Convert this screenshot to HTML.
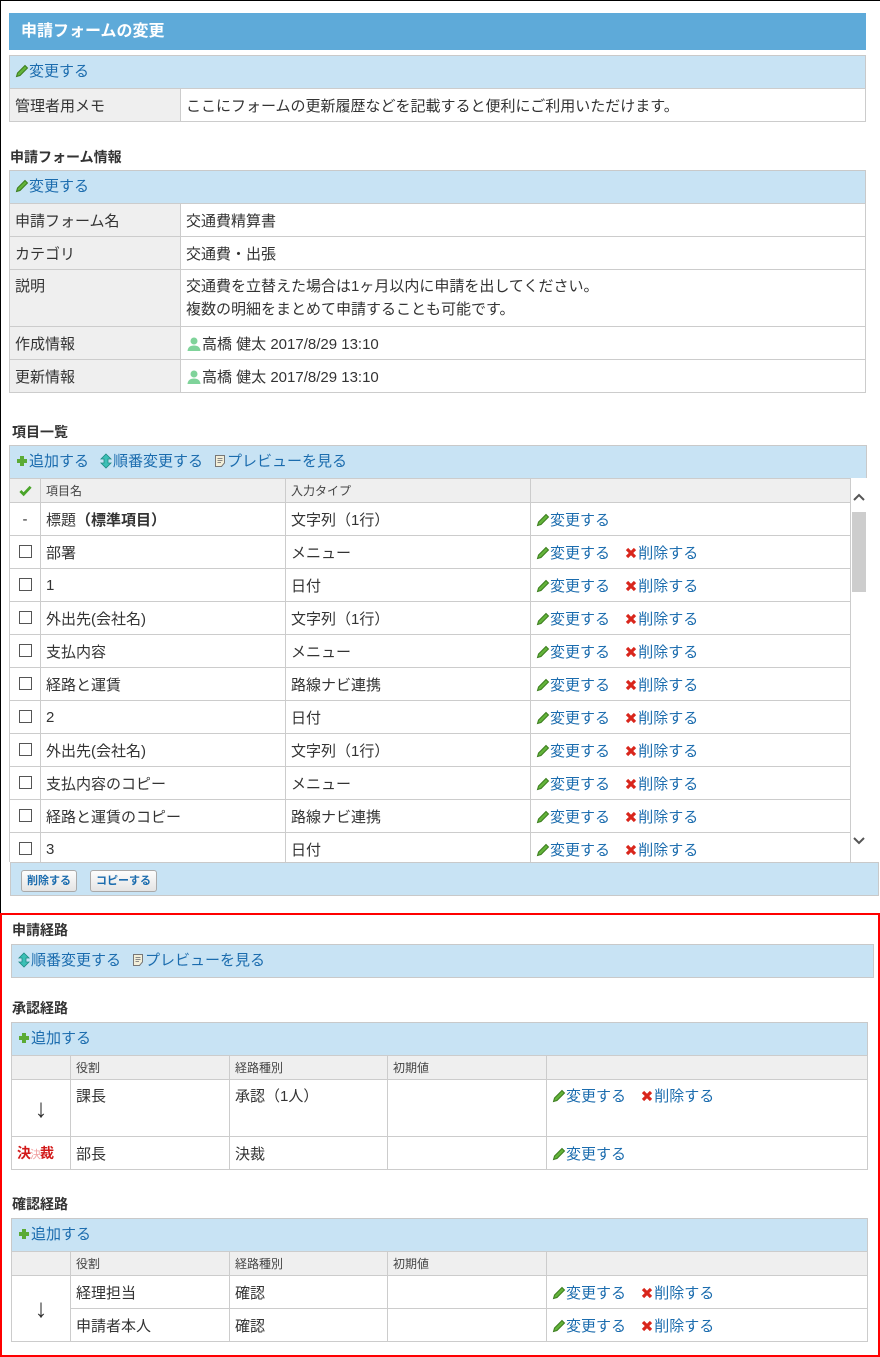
<!DOCTYPE html>
<html><head><meta charset="utf-8">
<style>
*{box-sizing:border-box;margin:0;padding:0}
body{width:880px;height:1357px;position:relative;background:#fff;font-family:"Liberation Sans","Noto Sans CJK JP",sans-serif;font-size:15px;color:#333;overflow:hidden}
.frame{position:absolute;left:0;top:0;width:880px;height:1357px;border:1px solid #000;border-right:none;border-bottom:none}
.red{position:absolute;left:0;top:913px;width:880px;height:444px;border:2px solid #f00}
.title{position:absolute;left:9px;top:13px;width:857px;height:37px;background:#5eaad9;color:#fff;font-weight:bold;font-size:16px;line-height:37px;padding-left:12px}
.bar{position:absolute;background:#c8e3f4;border:1px solid #c9c9c9;height:34px;line-height:32px;padding-left:5px;color:#1b6cae;font-size:15px;white-space:nowrap}
.bar span{margin-right:10px}
h3{position:absolute;font-size:14px;font-weight:bold;color:#333}
table{position:absolute;border-collapse:collapse;table-layout:fixed;font-size:15px;color:#333}
td{border:1px solid #ccc;padding:0 5px;height:33px;vertical-align:middle;white-space:nowrap;overflow:hidden}
td.l{background:#efefef}
tr.h td{background:#efefef;height:24px;font-size:12px;color:#444}
a{color:#1b6cae;text-decoration:none;margin-right:10px}
svg{vertical-align:-2px}
.cb{display:inline-block;width:13px;height:13px;border:1px solid #555;vertical-align:-1px}
.btn{position:absolute;top:7px;height:22px;border:1px solid #aaa;border-radius:3px;background:linear-gradient(#fdfdfd,#e4e4e4);font-size:11px;font-weight:bold;color:#1b6cae;line-height:20px;padding:0 5px}
</style></head><body>
<svg width="0" height="0" style="position:absolute">
<defs>
<symbol id="pen" viewBox="0 0 14 14"><path d="M1.5 12.5 L2.5 9 L10 1.5 L12.5 4 L5 11.5 Z" fill="#63b33a" stroke="#3c7d1f" stroke-width="1"/></symbol>
<symbol id="del" viewBox="0 0 14 14"><path d="M3 3 L11 11 M11 3 L3 11" stroke="#d9261c" stroke-width="3.2"/></symbol>
<symbol id="plus" viewBox="0 0 14 14"><path d="M7 2 V12 M2 7 H12" stroke="#5bab35" stroke-width="4"/></symbol>
<symbol id="ud" viewBox="0 0 14 16"><path d="M7 1 L12 6 H9 V10 H12 L7 15 L2 10 H5 V6 H2 Z" fill="#3cc0b6" stroke="#1e8a82" stroke-width="0.8"/></symbol>
<symbol id="doc" viewBox="0 0 14 14"><path d="M2.5 1.5 H11.5 V9 L8.5 12.5 H2.5 Z" fill="#f3efd9" stroke="#777"/><path d="M4.5 4.5 H9.5 M4.5 6.5 H9.5 M4.5 8.5 H8" stroke="#888"/></symbol>
<symbol id="user" viewBox="0 0 16 16"><circle cx="8" cy="5" r="3.5" fill="#7fd39a"/><path d="M1.5 15 Q2 9.5 8 9.5 Q14 9.5 14.5 15 Z" fill="#7fd39a"/></symbol>
</defs></svg>
<div class="frame"></div>
<div class="title">申請フォームの変更</div>

<div class="bar" style="left:9px;top:55px;width:857px"><svg width="14" height="14"><use href="#pen"/></svg>変更する</div>
<table style="left:9px;top:88px;width:857px"><col style="width:171px"><col>
<tr><td class="l">管理者用メモ</td><td>ここにフォームの更新履歴などを記載すると便利にご利用いただけます。</td></tr></table>

<h3 style="left:10px;top:147px">申請フォーム情報</h3>
<div class="bar" style="left:9px;top:170px;width:857px"><svg width="14" height="14"><use href="#pen"/></svg>変更する</div>
<table style="left:9px;top:203px;width:857px"><col style="width:171px"><col>
<tr><td class="l">申請フォーム名</td><td>交通費精算書</td></tr>
<tr><td class="l">カテゴリ</td><td>交通費・出張</td></tr>
<tr><td class="l" style="height:57px;vertical-align:top;padding-top:5px">説明</td><td style="vertical-align:top;padding-top:5px;line-height:23px">交通費を立替えた場合は1ヶ月以内に申請を出してください。<br>複数の明細をまとめて申請することも可能です。</td></tr>
<tr><td class="l">作成情報</td><td><svg width="16" height="16" style="vertical-align:-3px"><use href="#user"/></svg>高橋 健太 2017/8/29 13:10</td></tr>
<tr><td class="l">更新情報</td><td><svg width="16" height="16" style="vertical-align:-3px"><use href="#user"/></svg>高橋 健太 2017/8/29 13:10</td></tr>
</table>

<h3 style="left:12px;top:422px">項目一覧</h3>
<div class="bar" style="left:9px;top:445px;width:858px"><span><svg width="14" height="14"><use href="#plus"/></svg>追加する</span><span><svg width="14" height="16" style="vertical-align:-3px"><use href="#ud"/></svg>順番変更する</span><span><svg width="14" height="14"><use href="#doc"/></svg>プレビューを見る</span></div>
<div style="position:absolute;left:9px;top:478px;width:858px;height:384px;overflow:hidden">
<table style="left:0;top:0;width:842px"><col style="width:31px"><col style="width:245px"><col style="width:245px"><col>
<tr class="h"><td style="text-align:center"><svg width="13" height="13" viewBox="0 0 14 14"><path d="M1.5 7.5 L5 11 L12.5 3" stroke="#4aa52a" stroke-width="3" fill="none"/></svg></td><td>項目名</td><td>入力タイプ</td><td></td></tr>
<tr><td style="text-align:center">-</td><td>標題<b>（標準項目）</b></td><td>文字列（1行）</td><td><a><svg width="14" height="14"><use href="#pen"/></svg>変更する</a></td></tr>
<tr><td style="text-align:center"><span class="cb"></span></td><td>部署</td><td>メニュー</td><td><a><svg width="14" height="14"><use href="#pen"/></svg>変更する</a> <a><svg width="14" height="14"><use href="#del"/></svg>削除する</a></td></tr>
<tr><td style="text-align:center"><span class="cb"></span></td><td>1</td><td>日付</td><td><a><svg width="14" height="14"><use href="#pen"/></svg>変更する</a> <a><svg width="14" height="14"><use href="#del"/></svg>削除する</a></td></tr>
<tr><td style="text-align:center"><span class="cb"></span></td><td>外出先(会社名)</td><td>文字列（1行）</td><td><a><svg width="14" height="14"><use href="#pen"/></svg>変更する</a> <a><svg width="14" height="14"><use href="#del"/></svg>削除する</a></td></tr>
<tr><td style="text-align:center"><span class="cb"></span></td><td>支払内容</td><td>メニュー</td><td><a><svg width="14" height="14"><use href="#pen"/></svg>変更する</a> <a><svg width="14" height="14"><use href="#del"/></svg>削除する</a></td></tr>
<tr><td style="text-align:center"><span class="cb"></span></td><td>経路と運賃</td><td>路線ナビ連携</td><td><a><svg width="14" height="14"><use href="#pen"/></svg>変更する</a> <a><svg width="14" height="14"><use href="#del"/></svg>削除する</a></td></tr>
<tr><td style="text-align:center"><span class="cb"></span></td><td>2</td><td>日付</td><td><a><svg width="14" height="14"><use href="#pen"/></svg>変更する</a> <a><svg width="14" height="14"><use href="#del"/></svg>削除する</a></td></tr>
<tr><td style="text-align:center"><span class="cb"></span></td><td>外出先(会社名)</td><td>文字列（1行）</td><td><a><svg width="14" height="14"><use href="#pen"/></svg>変更する</a> <a><svg width="14" height="14"><use href="#del"/></svg>削除する</a></td></tr>
<tr><td style="text-align:center"><span class="cb"></span></td><td>支払内容のコピー</td><td>メニュー</td><td><a><svg width="14" height="14"><use href="#pen"/></svg>変更する</a> <a><svg width="14" height="14"><use href="#del"/></svg>削除する</a></td></tr>
<tr><td style="text-align:center"><span class="cb"></span></td><td>経路と運賃のコピー</td><td>路線ナビ連携</td><td><a><svg width="14" height="14"><use href="#pen"/></svg>変更する</a> <a><svg width="14" height="14"><use href="#del"/></svg>削除する</a></td></tr>
<tr><td style="text-align:center"><span class="cb"></span></td><td>3</td><td>日付</td><td><a><svg width="14" height="14"><use href="#pen"/></svg>変更する</a> <a><svg width="14" height="14"><use href="#del"/></svg>削除する</a></td></tr>
</table>
<div style="position:absolute;left:842px;top:0;width:16px;height:384px;background:#fff">
<svg width="16" height="14" style="position:absolute;top:12px;left:0"><path d="M3 10 L8 5 L13 10" stroke="#555" stroke-width="2" fill="none"/></svg>
<div style="position:absolute;left:1px;top:34px;width:14px;height:80px;background:#cdcdcd"></div>
<svg width="16" height="14" style="position:absolute;top:356px;left:0"><path d="M3 4 L8 9 L13 4" stroke="#555" stroke-width="2" fill="none"/></svg>
</div>
</div>
<div class="bar" style="left:10px;top:862px;width:869px;height:34px">
<div class="btn" style="left:10px">削除する</div><div class="btn" style="left:79px">コピーする</div></div>

<div class="red"></div>
<h3 style="left:12px;top:920px">申請経路</h3>
<div class="bar" style="left:11px;top:944px;width:863px"><span><svg width="14" height="16" style="vertical-align:-3px"><use href="#ud"/></svg>順番変更する</span><span><svg width="14" height="14"><use href="#doc"/></svg>プレビューを見る</span></div>

<h3 style="left:12px;top:998px">承認経路</h3>
<div class="bar" style="left:11px;top:1022px;width:857px"><svg width="14" height="14"><use href="#plus"/></svg>追加する</div>
<table style="left:11px;top:1055px;width:857px"><col style="width:59px"><col style="width:159px"><col style="width:158px"><col style="width:159px"><col>
<tr class="h"><td></td><td>役割</td><td>経路種別</td><td>初期値</td><td></td></tr>
<tr><td style="height:57px;text-align:center;font-size:26px;padding:0">↓</td><td style="vertical-align:top;padding-top:5px">課長</td><td style="vertical-align:top;padding-top:5px">承認（1人）</td><td></td><td style="vertical-align:top;padding-top:5px"><a><svg width="14" height="14"><use href="#pen"/></svg>変更する</a> <a><svg width="14" height="14"><use href="#del"/></svg>削除する</a></td></tr>
<tr><td style="padding:0 0 0 5px;color:#d21a1a;font-weight:bold;font-size:14px;letter-spacing:-1px">決<span style="color:#f0a0a0;font-weight:normal;font-size:11px">決</span>裁</td><td>部長</td><td>決裁</td><td></td><td><a><svg width="14" height="14"><use href="#pen"/></svg>変更する</a></td></tr>
</table>

<h3 style="left:12px;top:1194px">確認経路</h3>
<div class="bar" style="left:11px;top:1218px;width:857px"><svg width="14" height="14"><use href="#plus"/></svg>追加する</div>
<table style="left:11px;top:1251px;width:857px"><col style="width:59px"><col style="width:159px"><col style="width:158px"><col style="width:159px"><col>
<tr class="h"><td></td><td>役割</td><td>経路種別</td><td>初期値</td><td></td></tr>
<tr><td rowspan="2" style="text-align:center;font-size:26px;padding:0">↓</td><td>経理担当</td><td>確認</td><td></td><td><a><svg width="14" height="14"><use href="#pen"/></svg>変更する</a> <a><svg width="14" height="14"><use href="#del"/></svg>削除する</a></td></tr>
<tr><td>申請者本人</td><td>確認</td><td></td><td><a><svg width="14" height="14"><use href="#pen"/></svg>変更する</a> <a><svg width="14" height="14"><use href="#del"/></svg>削除する</a></td></tr>
</table>
</body></html>
